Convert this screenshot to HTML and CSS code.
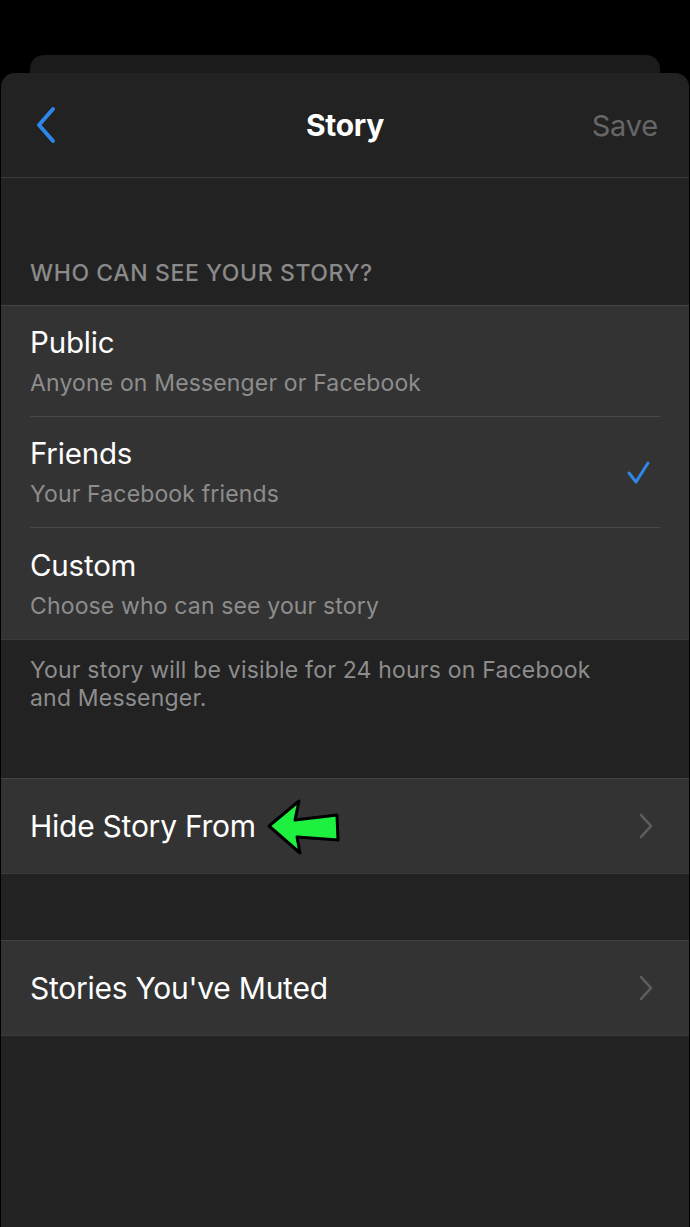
FILE: index.html
```html
<!DOCTYPE html>
<html>
<head>
<meta charset="utf-8">
<link rel="stylesheet" href="styles.css">
</head>
<body>
<div class="screen">
  <div class="back-card"></div>
  <div class="sheet">
    <header class="nav">
      <svg class="back" width="24" height="38" viewBox="0 0 24 38"><path d="M19 3 L5 19 L19 35" fill="none" stroke="#2d86e8" stroke-width="4" stroke-linecap="round" stroke-linejoin="round"/></svg>
      <div class="title">Story</div>
      <div class="save">Save</div>
    </header>

    <div class="section-label">WHO CAN SEE YOUR STORY?</div>
    <div class="group">
      <div class="option">
        <div class="texts">
          <div class="opt-title">Public</div>
          <div class="opt-sub">Anyone on Messenger or Facebook</div>
        </div>
      </div>
      <div class="option">
        <div class="texts">
          <div class="opt-title">Friends</div>
          <div class="opt-sub">Your Facebook friends</div>
        </div>
        <svg class="check" width="26" height="26" viewBox="0 0 26 26"><path d="M3 13 L10 22 L22 3" fill="none" stroke="#2d86e8" stroke-width="3" stroke-linecap="round" stroke-linejoin="round"/></svg>
      </div>
      <div class="option">
        <div class="texts">
          <div class="opt-title">Custom</div>
          <div class="opt-sub">Choose who can see your story</div>
        </div>
      </div>
    </div>
    <div class="footnote">Your story will be visible for 24 hours on Facebook<br>and Messenger.</div>

    <div class="group nav-group first">
      <div class="link-row">
        <span class="link-label">Hide Story From</span>
        <svg class="arrow" width="76" height="58" viewBox="0 0 76 58"><polygon points="3,28 33,3 29,22 71,17 72,42 31,39 34,55" fill="#1ef040" stroke="#000" stroke-width="3" stroke-linejoin="round"/></svg>
        <svg class="chev" width="16" height="26" viewBox="0 0 16 26"><path d="M3 2 L13 13 L3 24" fill="none" stroke="#5e5e5e" stroke-width="2.6" stroke-linecap="round" stroke-linejoin="round"/></svg>
      </div>
    </div>

    <div class="group nav-group second">
      <div class="link-row">
        <span class="link-label">Stories You've Muted</span>
        <svg class="chev" width="16" height="26" viewBox="0 0 16 26"><path d="M3 2 L13 13 L3 24" fill="none" stroke="#5e5e5e" stroke-width="2.6" stroke-linecap="round" stroke-linejoin="round"/></svg>
      </div>
    </div>
  </div>
</div>
</body>
</html>
```

FILE: styles.css
```css
* { box-sizing: border-box; }
html, body {
  margin: 0;
  padding: 0;
  background: #000;
}
body {
  font-family: "Inter", "Roboto", "Liberation Sans", sans-serif;
  color: #fff;
  width: 690px;
  height: 1227px;
  overflow: hidden;
}
.screen {
  padding-top: 55px;
  height: 1227px;
  display: flex;
  flex-direction: column;
}
.back-card {
  height: 18px;
  margin: 0 30px;
  background: #1b1b1b;
  border-radius: 14px 14px 0 0;
  flex: none;
}
.sheet {
  flex: 1;
  margin: 0 1px;
  background: #222222;
  border-radius: 14px 14px 0 0;
  display: flex;
  flex-direction: column;
}
.nav {
  height: 105px;
  border-bottom: 1px solid #3a3a3a;
  display: flex;
  align-items: center;
  justify-content: space-between;
  padding: 0 31px 0 33px;
  position: relative;
}
.back { display: block; }
.title {
  position: absolute;
  left: 0;
  right: 0;
  text-align: center;
  font-size: 30px;
  font-weight: 700;
  letter-spacing: -0.3px;
  pointer-events: none;
}
.save {
  font-size: 29px;
  color: #666666;
  letter-spacing: -0.2px;
}
.section-label {
  padding: 83px 29px 20px;
  font-size: 23px;
  line-height: 24px;
  font-weight: 500;
  color: #8a8a8a;
  letter-spacing: 0.6px;
}
.group {
  background: #333333;
  border-top: 1px solid #444444;
  border-bottom: 1px solid #3a3a3a;
}
.option {
  height: 111px;
  margin-left: 29px;
  margin-right: 29px;
  padding-right: 38px;
  display: flex;
  align-items: center;
  justify-content: space-between;
  border-bottom: 1px solid #484848;
}
.option:last-child { border-bottom: none; }
.option .check { margin-right: -30px; margin-top: 2px; }
.texts { display: flex; flex-direction: column; gap: 10px; margin-top: 0; }
.opt-title {
  font-size: 29.5px;
  line-height: 34px;
  letter-spacing: -0.2px;
}
.opt-sub {
  font-size: 23px;
  line-height: 28px;
  color: #8d8d8d;
  letter-spacing: 0.15px;
}
.footnote {
  padding: 16px 29px 0;
  font-size: 23px;
  line-height: 28px;
  color: #8d8d8d;
  letter-spacing: 0.2px;
}
.nav-group.first { margin-top: 66px; }
.nav-group.second { margin-top: 66px; }
.link-row {
  height: 94px;
  display: flex;
  align-items: center;
  padding: 0 35px 0 29px;
}
.link-label {
  font-size: 30px;
  letter-spacing: -0.25px;
}
.arrow { margin-left: 10px; margin-top: 2px; }
.chev { margin-left: auto; }
```
